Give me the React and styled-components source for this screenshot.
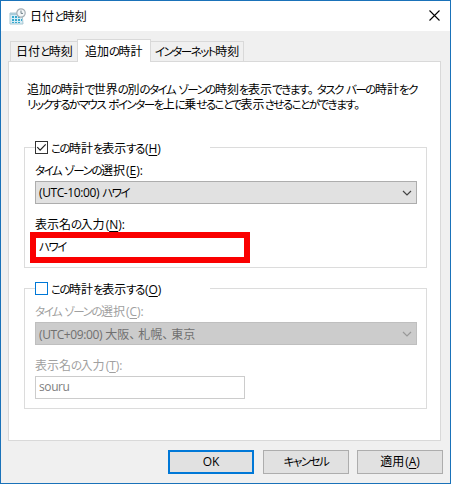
import { useState } from "react";
import styled, { createGlobalStyle, css } from "styled-components";

const GlobalStyle = createGlobalStyle`
  * {
    box-sizing: border-box;
  }
  body {
    margin: 0;
    overflow: hidden;
    font-family: "Open Sans", "Noto Sans CJK JP", sans-serif;
    font-size: 12px;
    color: #000;
  }
`;

const Window = styled.div`
  width: 451px;
  height: 484px;
  border: 1px solid #1a72b9;
  background-color: #f0f0f0;
  display: flex;
  flex-direction: column;
`;

const TitleBar = styled.div`
  height: 30px;
  padding: 0 10px 0 8px;
  background-color: white;
  display: flex;
  align-items: center;
`;

const Title = styled.div`
  flex: 1;
  margin-left: 4px;
`;

const CloseButton = styled.button`
  width: 11px;
  height: 11px;
  margin-top: -1px;
  padding: 0;
  border: none;
  background: none;
  display: flex;
`;

const Tabs = styled.div`
  height: 30px;
  padding: 0 9px;
  display: flex;
  align-items: flex-end;
`;

const Tab = styled.button`
  width: ${(props) => props.$width}px;
  height: 20px;
  padding: 0 0 0 ${(props) => props.$indent}px;
  border: 1px solid #d9d9d9;
  border-bottom: none;
  background-color: #f0f0f0;
  font: inherit;
  color: inherit;
  line-height: 19px;
  text-align: left;
  white-space: nowrap;
  ${(props) =>
    props.$first &&
    css`
      border-right: none;
    `}
  ${(props) =>
    props.$last &&
    css`
      border-left: none;
    `}
  ${(props) =>
    props.$active &&
    css`
      height: 23px;
      margin-bottom: -1px;
      background-color: white;
      z-index: 1;
    `}
`;

const Panel = styled.div`
  width: 433px;
  height: 380px;
  margin-left: 7px;
  padding: 20px 13px 0 15px;
  border: 1px solid #d9d9d9;
  background-color: white;
`;

const Description = styled.p`
  height: 59px;
  margin: 0;
  padding-left: 3px;
  line-height: 15px;
  white-space: nowrap;
`;

const Group = styled.fieldset`
  width: 403px;
  height: 127px;
  margin: 0 0 14px;
  padding: 0 9px 0 10px;
  border: 1px solid #dcdcdc;
  min-width: 0;
`;

const Legend = styled.legend`
  width: 175px;
  height: 13px;
  padding: 0;
  display: flex;
  align-items: center;
`;

const CheckBox = styled.span`
  width: 13px;
  height: 13px;
  margin-right: 3px;
  border: 1px solid ${(props) => (props.$checked ? "#333" : "#0078d7")};
  background-color: white;
  display: flex;
`;

const Label = styled.div`
  height: 17px;
  line-height: 17px;
  margin-top: ${(props) => props.$gap}px;
  color: ${(props) => (props.$disabled ? "#a0a0a0" : "inherit")};
`;

const Select = styled.div`
  width: 382px;
  height: 23px;
  margin-top: 2px;
  padding: 0 4px 0 3px;
  border: 1px solid ${(props) => (props.$disabled ? "#bfbfbf" : "#adadad")};
  background-color: ${(props) => (props.$disabled ? "#ccc" : "#e1e1e1")};
  color: ${(props) => (props.$disabled ? "#707070" : "inherit")};
  display: flex;
  align-items: center;
  justify-content: space-between;
`;

const Field = styled.div`
  width: 210px;
  height: 23px;
  margin-top: 2px;
  padding-left: 3px;
  border: 1px solid #ccc;
  color: #808080;
  line-height: 20px;
  ${(props) =>
    props.$marked &&
    css`
      width: 220px;
      height: 31px;
      margin: -1px 0 0 -5px;
      border: 6px solid #fa0000;
      color: inherit;
      line-height: 18px;
    `}
`;

const Buttons = styled.div`
  margin-top: 9px;
  padding-right: 7px;
  display: flex;
  justify-content: flex-end;
  gap: 8px;
`;

const Button = styled.button`
  width: 86px;
  height: 24px;
  margin-right: ${(props) => (props.$primary ? "1px" : "0")};
  padding: 0;
  border: ${(props) => (props.$primary ? "2px solid #0078d7" : "1px solid #adadad")};
  background-color: #e1e1e1;
  font: inherit;
  color: inherit;
  line-height: 20px;
`;

const Kana = styled.span`
  font-size: 11.5px;
  font-feature-settings: "palt";
  letter-spacing: -1.5px;
`;

const Latin = styled.span`
  letter-spacing: -0.4px;
`;

const Punctuation = styled.span`
  letter-spacing: -3px;
`;

const KeyHint = styled.span`
  margin-left: 1px;
`;

const Key = styled.span`
  text-decoration: underline;
  text-underline-offset: 2px;
`;

// Kana, latin and punctuation are set tighter than the kanji around them
const Text = ({ children }) =>
  children.split(/([\u3040-\u30ff]+|[!-~]+|[、。])/).map((part, i) => {
    if (i % 2 === 0) return part;
    if (/[!-~]/.test(part)) return <Latin key={i}>{part}</Latin>;
    if (/[、。]/.test(part)) return <Punctuation key={i}>{part}</Punctuation>;
    return <Kana key={i}>{part}</Kana>;
  });

const AccessKey = ({ letter }) => (
  <KeyHint>
    (<Key>{letter}</Key>)
  </KeyHint>
);

const DateIcon = () => (
  <svg width="17" height="17" viewBox="0 0 17 17">
    <path d="M1 5h12l1 11H1z" fill="#d7edf5" stroke="#a9c7d3" />
    <path d="M1 5h11v2H1z" fill="#a9cbd8" />
    <path
      d="M3 8h2v2H3zM6 8h2v2H6zM9 8h2v2H9zM3 11h2v2H3zM6 11h2v2H6zM9 11h2v2H9zM12 11h1v2h-1zM3 14h2v1H3zM6 14h2v1H6zM9 14h2v1H9z"
      fill="#35a9cf"
    />
    <circle cx="12" cy="5" r="4.2" fill="#f3f6f7" stroke="#a5afb5" strokeWidth="1.2" />
    <path d="M12 2.5V5.4h2" fill="none" stroke="#71828b" />
  </svg>
);

const Chevron = ({ color }) => (
  <svg width="10" height="6" viewBox="0 0 10 6">
    <path d="M1 1l4 4 4-4" fill="none" stroke={color} strokeWidth="1.2" />
  </svg>
);

const ClockGroup = ({ keys, checked, onToggle, zone, name }) => (
  <Group>
    <Legend onClick={onToggle}>
      <CheckBox $checked={checked}>
        {checked && (
          <svg width="11" height="11" viewBox="0 0 11 11">
            <path d="M1.3 5.2l2.8 2.9 5.6-5.8" fill="none" stroke="#222" strokeWidth="1.2" />
          </svg>
        )}
      </CheckBox>
      <span>
        <Text>この時計を表示する</Text>
        <AccessKey letter={keys[0]} />
      </span>
    </Legend>
    <Label $gap={8} $disabled={!checked}>
      <Text>タイム ゾーンの選択</Text>
      <AccessKey letter={keys[1]} />:
    </Label>
    <Select $disabled={!checked}>
      <span>
        <Text>{zone}</Text>
      </span>
      <Chevron color={checked ? "#444" : "#999"} />
    </Select>
    <Label $gap={12} $disabled={!checked}>
      <Text>表示名の入力</Text>
      <AccessKey letter={keys[2]} />:
    </Label>
    <Field $marked={checked}>
      <Text>{name}</Text>
    </Field>
  </Group>
);

const App = () => {
  const [first, setFirst] = useState(true);
  const [second, setSecond] = useState(false);

  return (
    <>
      <GlobalStyle />
      <Window>
        <TitleBar>
          <DateIcon />
          <Title>
            <Text>日付と時刻</Text>
          </Title>
          <CloseButton>
            <svg width="11" height="11" viewBox="0 0 11 11">
              <path d="M.5 .5l10 10M10.5 .5l-10 10" stroke="#000" strokeWidth="1.1" />
            </svg>
          </CloseButton>
        </TitleBar>
        <Tabs>
          <Tab $width={67} $indent={5} $first>
            <Text>日付と時刻</Text>
          </Tab>
          <Tab $width={74} $indent={7} $active>
            <Text>追加の時計</Text>
          </Tab>
          <Tab $width={93} $indent={4} $last>
            <Text>インターネット時刻</Text>
          </Tab>
        </Tabs>
        <Panel>
          <Description>
            <Text>追加の時計で世界の別のタイム ゾーンの時刻を表示できます。タスク バーの時計をク</Text>
            <br />
            <Text>リックするかマウス ポインターを上に乗せることで表示させることができます。</Text>
          </Description>
          <ClockGroup
            keys="HEN"
            checked={first}
            onToggle={() => setFirst(!first)}
            zone="(UTC-10:00) ハワイ"
            name="ハワイ"
          />
          <ClockGroup
            keys="OCT"
            checked={second}
            onToggle={() => setSecond(!second)}
            zone="(UTC+09:00) 大阪、札幌、東京"
            name="souru"
          />
        </Panel>
        <Buttons>
          <Button $primary>OK</Button>
          <Button>
            <Text>キャンセル</Text>
          </Button>
          <Button>
            適用
            <AccessKey letter="A" />
          </Button>
        </Buttons>
      </Window>
    </>
  );
};

export default App;
